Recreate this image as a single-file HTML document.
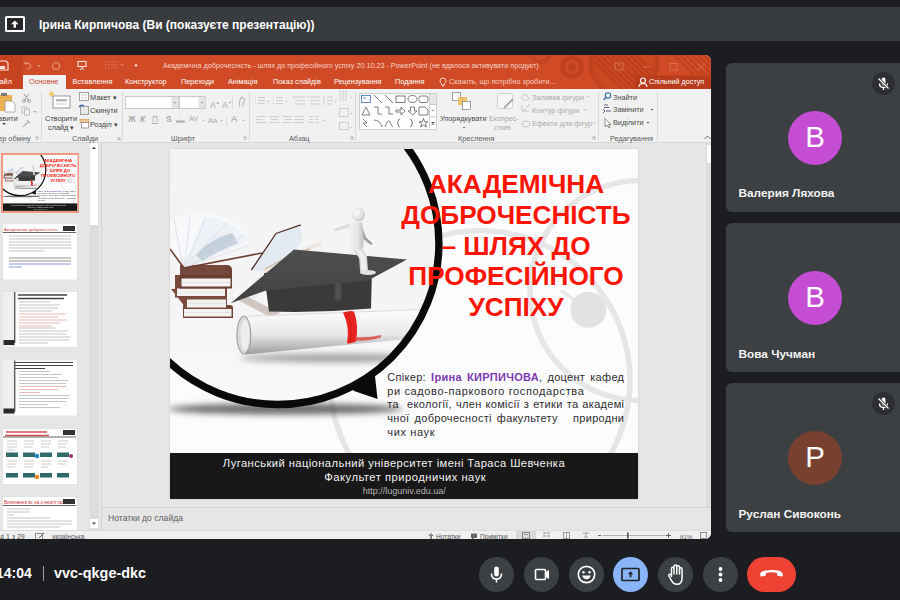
<!DOCTYPE html>
<html><head><meta charset="utf-8">
<style>
*{margin:0;padding:0;box-sizing:border-box}
html,body{width:900px;height:600px;overflow:hidden;background:#1c1d21;font-family:"Liberation Sans",sans-serif}
.a{position:absolute;white-space:nowrap}
#topbar{left:0;top:6.5px;width:900px;height:34.5px;background:#393c3f}
#ppt{left:0;top:55px;width:711px;height:484px;background:#e6e6e6;border-radius:0 6px 6px 0;overflow:hidden}
.tile{left:725.5px;width:175px;height:149.5px;background:#3c4043;border-radius:6px 0 0 6px}
.av{left:62.5px;top:48px;width:54px;height:54px;border-radius:50%;color:#fff;font-size:29.5px;text-align:center;line-height:52.6px}
.nm{left:13px;top:123.8px;color:#f4f4f4;font-size:11.8px;font-weight:bold;line-height:14px}
.mute{left:146px;top:9.5px;width:23px;height:23px;border-radius:50%;background:#2c2e31}
.tab{top:22px;color:#fff;font-size:7.3px;line-height:9px}
.rt{color:#444;font-size:7.3px;line-height:9px}
.rl{color:#5a5a5a;font-size:7.3px;line-height:9px}
.ttl{left:0;width:692px;text-align:center;color:#fa1505;font-size:26.2px;font-weight:bold;line-height:24px}
.sp{left:217.3px;width:237px;color:#2e2e2e;font-size:11px;letter-spacing:0.62px;line-height:12px}
.sp.j{text-align:justify;text-align-last:justify}
.bt{color:#f2f2f2;line-height:12px}
.st{color:#555;font-size:7px;line-height:9px}
.btn{top:556.5px;width:35px;height:35px;border-radius:50%;background:#3c4043}
.btn svg{position:absolute;left:0;top:0}
</style></head><body>
<div id="topbar" class="a">
  <div class="a" style="left:5px;top:9.8px;width:19.5px;height:15.5px;border:2px solid #fff;border-radius:1.5px;background:#24262a"></div>
  <svg class="a" style="left:9px;top:13.5px" width="12" height="9" viewBox="0 0 12 9"><path d="M5.8 0.5 L2 4.3 H4.6 V7.8 H7 V4.3 H9.6 Z" fill="#fff"/></svg>
  <div class="a" style="left:39px;top:11px;color:#fff;font-size:12px;font-weight:bold;line-height:14px">Ірина Кирпичова (Ви (показуєте презентацію))</div>
</div>

<div id="ppt" class="a">
  <!-- orange header -->
  <div class="a" style="left:0;top:0;width:711px;height:34px;background:#d04a26;overflow:hidden">
    <svg class="a" style="left:0;top:0" width="711" height="34" viewBox="0 0 711 34">
      <defs><clipPath id="oc1"><circle cx="624" cy="7.7" r="31"/></clipPath><clipPath id="oc2"><circle cx="712" cy="-6" r="40"/></clipPath></defs>
      <rect x="0" y="0" width="22.5" height="34" fill="#c7431f"/>
      <circle cx="541" cy="-2" r="9" fill="none" stroke="#c5431f" stroke-width="4"/>
      <circle cx="572" cy="12" r="9.5" fill="none" stroke="#bf411e" stroke-width="4.5"/>
      <circle cx="572" cy="12" r="4.2" fill="#bf411e"/>
      <g clip-path="url(#oc1)"><rect x="590" y="-30" width="70" height="70" fill="#cb4720"/>
        <path d="M580 -20 L640 40 M586 -20 L646 40 M592 -20 L652 40 M598 -20 L658 40 M604 -20 L664 40 M610 -20 L670 40 M616 -20 L676 40 M574 -20 L634 40 M568 -20 L628 40" stroke="#bc3f1c" stroke-width="2"/></g>
      <circle cx="624" cy="7.7" r="33" fill="none" stroke="#c1421e" stroke-width="5"/>
      <g clip-path="url(#oc2)"><path d="M660 -20 L720 40 M666 -20 L726 40 M672 -20 L732 40 M678 -20 L738 40 M684 -20 L744 40 M654 -20 L714 40" stroke="#c1411d" stroke-width="2"/></g>
      <rect x="635" y="20.5" width="76" height="13.5" fill="#b93c1c"/>
    </svg>
    <!-- quick access -->
    <svg class="a" style="left:0;top:5px" width="160" height="12" viewBox="0 0 160 12">
      <path d="M-2 1 H6 L8 3 V10 H-2 Z" fill="none" stroke="#fbe3da" stroke-width="1.2"/><rect x="0" y="6" width="5" height="3" fill="#fbe3da"/>
      <path d="M25 4 Q30 2 31 6 Q31 9 27 9 M25 4 L24 1.5 M25 4 L27.5 2" stroke="#e9987f" stroke-width="1" fill="none"/>
      <path d="M37 5 L39 7 L41 5" fill="#e9987f"/>
      <circle cx="56" cy="6" r="3.5" fill="none" stroke="#e9987f" stroke-width="1.1"/>
      <rect x="78" y="1.5" width="8" height="5" fill="none" stroke="#fbe3da" stroke-width="1.1"/><path d="M82 6.5 V10 M80 10 L82 8 L84 10" stroke="#fbe3da" stroke-width="1"/>
      <path d="M105 2 H118 M105 5 H118 M105 8 H118" stroke="#e47c5e" stroke-width="0.9" stroke-dasharray="2 1"/>
      <path d="M120 4 L122 6 L124 4" fill="#e47c5e"/>
      <circle cx="136" cy="5.5" r="1.2" fill="#fbe3da"/>
    </svg>
    <div class="a" style="left:163px;top:6px;color:#f7d3c6;font-size:7.2px;line-height:9px">Академічна доброчесність - шлях до професійного успіху 20.10.23 - PowerPoint (не вдалося активувати продукт)</div>
    <svg class="a" style="left:612px;top:7px" width="99" height="11" viewBox="0 0 99 11">
      <rect x="3" y="1" width="8" height="7" fill="none" stroke="#dd7a5c" stroke-width="0.8"/><path d="M5 3 H9" stroke="#dd7a5c" stroke-width="0.8"/>
      <path d="M31 5 H38" stroke="#dd7a5c" stroke-width="0.8"/>
      <rect x="58" y="1.5" width="7" height="6.5" fill="none" stroke="#dd7a5c" stroke-width="0.8"/>
      <path d="M86 1.5 L93 8.5 M93 1.5 L86 8.5" stroke="#dd7a5c" stroke-width="0.8"/>
    </svg>
    <!-- tabs -->
    <div class="a" style="left:23px;top:19.5px;width:42.5px;height:14.5px;background:#f1f1f1"></div>
    <div class="a tab" style="left:-6px">Файл</div>
    <div class="a tab" style="left:29px;color:#c8472a">Основне</div>
    <div class="a tab" style="left:72.6px">Вставлення</div>
    <div class="a tab" style="left:125px">Конструктор</div>
    <div class="a tab" style="left:181px">Переходи</div>
    <div class="a tab" style="left:228px">Анімація</div>
    <div class="a tab" style="left:273px">Показ слайдів</div>
    <div class="a tab" style="left:334px">Рецензування</div>
    <div class="a tab" style="left:395px">Подання</div>
    <svg class="a" style="left:439px;top:22px" width="8" height="10" viewBox="0 0 8 10"><path d="M4 1 Q7 1 7 4 Q7 5.5 5.5 6.5 V8 H2.5 V6.5 Q1 5.5 1 4 Q1 1 4 1 Z M3 9 H5" stroke="#fbe3da" stroke-width="0.9" fill="none"/></svg>
    <div class="a tab" style="left:449px;color:#f6cfc2">Скажіть, що потрібно зробити...</div>
    <svg class="a" style="left:638px;top:21.5px" width="10" height="11" viewBox="0 0 10 11"><circle cx="5" cy="3.5" r="2.5" fill="none" stroke="#fff" stroke-width="1.1"/><path d="M1 10 Q1 6.5 5 6.5 Q9 6.5 9 10" fill="none" stroke="#fff" stroke-width="1.1"/></svg>
    <div class="a tab" style="left:649px;font-size:7.2px">Спільний доступ</div>
  </div>
  <!-- ribbon -->
  <div id="ribbon" class="a" style="left:0;top:34px;width:711px;height:54px;background:#f1f1f1;border-bottom:1px solid #d6d6d6">
    <svg class="a" style="left:0;top:0" width="711" height="54" viewBox="0 0 711 54">
      <g stroke="#dadada" stroke-width="1"><path d="M41.5 3 V52 M122.5 3 V52 M249.5 3 V52 M355.5 3 V52 M598.5 3 V52 M657.5 3 V52"/></g>
      <!-- paste -->
      <rect x="-3" y="6" width="15" height="16" rx="1" fill="#e9b04d"/><rect x="1" y="4" width="6" height="3" fill="#7a7a7a"/>
      <path d="M5 12 H12 L15 15 V23 H5 Z" fill="#fff" stroke="#9a9a9a" stroke-width="0.8"/>
      <path d="M24 5 L29 12 M29 5 L24 12" stroke="#9b9b9b" stroke-width="1"/><circle cx="24" cy="12" r="1.5" fill="none" stroke="#9b9b9b" stroke-width="0.8"/><circle cx="29" cy="12" r="1.5" fill="none" stroke="#9b9b9b" stroke-width="0.8"/>
      <rect x="22" y="18" width="5" height="6" fill="none" stroke="#b4b4b4" stroke-width="0.8"/><rect x="24.5" y="20" width="5" height="6" fill="#f1f1f1" stroke="#b4b4b4" stroke-width="0.8"/><path d="M33 22 L35 24 L37 22" fill="#b4b4b4"/>
      <path d="M23 38 L29 32 M27 31 L30 34" stroke="#b4b4b4" stroke-width="1.2"/>
      <path d="M35 48 H38 V51 M35.5 50.5 L38 48" stroke="#9d9d9d" stroke-width="0.7" fill="none"/>
      <!-- new slide -->
      <rect x="53" y="7" width="17" height="12" fill="#fff" stroke="#8c8c8c" stroke-width="0.9"/><rect x="56" y="10" width="11" height="2.5" fill="#b7b7b7"/><path d="M56 15 H67" stroke="#b7b7b7" stroke-width="0.8"/>
      <path d="M51.5 2 V8 M48.5 5 H54.5 M49.5 3 L53.5 7 M53.5 3 L49.5 7" stroke="#f2c14a" stroke-width="0.9"/>
      <rect x="79.5" y="3.5" width="9" height="8" fill="#fff" stroke="#8a8a8a" stroke-width="0.8"/><path d="M81 6 H87 M81 9 H84 M85 9 H87" stroke="#b0b0b0" stroke-width="0.7"/>
      <rect x="80.5" y="17.5" width="8" height="8" fill="#e8e8e8" stroke="#8a8a8a" stroke-width="0.8"/><path d="M79 18 Q81 15 84 17" stroke="#2b6cb3" stroke-width="1.3" fill="none"/>
      <rect x="80" y="30.5" width="9" height="3" fill="#f0c89a" stroke="#d89040" stroke-width="0.6"/><rect x="81.5" y="33.5" width="7" height="5.5" fill="#fff" stroke="#8a8a8a" stroke-width="0.8"/>
      <path d="M117 49 H120 V52 M117.5 51.5 L120 49" stroke="#9d9d9d" stroke-width="0.7" fill="none"/>
      <!-- font -->
      <rect x="125.5" y="7.5" width="53" height="12" fill="#fff" stroke="#c9c9c9"/><rect x="171.5" y="8" width="7" height="11" fill="#e4e4e4"/><path d="M173.5 13 L175 14.5 L176.5 13" fill="#9a9a9a"/>
      <rect x="179.5" y="7.5" width="26" height="12" fill="#fff" stroke="#c9c9c9"/><rect x="198.5" y="8" width="7" height="11" fill="#e4e4e4"/><path d="M200.5 13 L202 14.5 L203.5 13" fill="#9a9a9a"/>
      <path d="M232.5 6 V20 M226.5 27 V37" stroke="#dcdcdc" stroke-width="1"/>
      <path d="M240 18 Q238 12 242 8 L245 11 Q242 15 243 18" stroke="#b9b9b9" stroke-width="1.1" fill="none"/>
      <path d="M202 31 L203.5 32.5 L205 31 M220 31 L221.5 32.5 L223 31 M242 31 L243.5 32.5 L245 31" fill="#b9b9b9"/>
      <path d="M243 48 H246 V51 M243.5 50.5 L246 48" stroke="#9d9d9d" stroke-width="0.7" fill="none"/>
      <!-- paragraph (disabled icons) -->
      <g stroke="#cacaca" stroke-width="0.9">
        <g transform="translate(0 3)"><path d="M255 5.5 H256 M258 5.5 H265 M255 8.5 H256 M258 8.5 H265 M255 11.5 H256 M258 11.5 H265"/>
        <path d="M273 5.5 H274 M276 5.5 H283 M273 8.5 H274 M276 8.5 H283 M273 11.5 H274 M276 11.5 H283"/>
        <path d="M292 5 H305 M295 8.5 H305 M295 12 H305 M307 5 H320 M310 8.5 H320 M310 12 H320"/>
        <path d="M324 4 V13 M327 5 H333 M327 8.5 H333 M327 12 H333"/></g>
        <path d="M340 1 V12 M343 1 V12 M346 1 V12"/>
        <path d="M256 27.5 H266 M256 30.5 H263 M256 33.5 H266 M269 27.5 H279 M270.5 30.5 H277.5 M269 33.5 H279 M282 27.5 H292 M285 30.5 H292 M282 33.5 H292 M294 27.5 H304 M294 30.5 H304 M294 33.5 H304"/>
        <path d="M309 27.5 H313 M309 30.5 H313 M309 33.5 H313 M315 27.5 H319 M315 30.5 H319 M315 33.5 H319"/>
        <rect x="339.5" y="19.5" width="9" height="8" fill="none"/>
        <rect x="339.5" y="33.5" width="9" height="7" fill="none"/>
      </g>
      <path d="M267 12 L268.5 13.5 L270 12 M285 12 L286.5 13.5 L288 12 M334 12 L335.5 13.5 L337 12 M350 8 L351.5 9.5 L353 8 M322 31 L323.5 32.5 L325 31 M350 24 L351.5 25.5 L353 24 M350 38 L351.5 39.5 L353 38" fill="#c4c4c4"/>
      <path d="M350 48 H353 V51 M350.5 50.5 L353 48" stroke="#9d9d9d" stroke-width="0.7" fill="none"/>
      <!-- shapes gallery -->
      <rect x="359.5" y="4.5" width="77" height="36" fill="#fff" stroke="#d0d0d0"/>
      <rect x="429.5" y="4.5" width="7" height="11" fill="#e6e6e6" stroke="#d0d0d0"/><rect x="429.5" y="15.5" width="7" height="12.5" fill="#fff" stroke="#d0d0d0"/><rect x="429.5" y="28" width="7" height="12.5" fill="#fff" stroke="#d0d0d0"/>
      <path d="M432 21.5 H434 M431.5 33 L433 34.5 L434.5 33 M431.5 35.5 H434.5" stroke="#777" stroke-width="0.8"/>
      <g stroke="#5d5d5d" stroke-width="0.8" fill="none">
        <rect x="361.5" y="6.5" width="9" height="7" stroke="#3d6fb0"/><path d="M363 9 H366" stroke="#3d6fb0"/>
        <path d="M374 6 L382 14 M385 6 L393 14"/><rect x="396" y="7" width="9" height="6.5"/><ellipse cx="412.5" cy="10" rx="4.5" ry="3.5"/><rect x="419" y="7" width="9" height="6.5" rx="2"/>
        <path d="M362 26 L366 18 L370 26 Z M374 18 H378 V25 H382 M385 18 H389 V25 H393 M396 21 H401 V18 L405 22 L401 26 V23 H396 Z M410.5 18 V22 H408 L412.5 26 L417 22 H414.5 V18 Z M419 18 H425 L428 21 V26 H419 Z"/>
        <path d="M363 30 L367 34 L363 34 L367 38 M374 31 Q380 31 382 38 M385 38 Q388 29 390 33 Q392 38 393 38 M400 30 Q398 30 398 33 Q398 34 397 34 Q398 34 398 35 Q398 38 400 38 M410 30 Q412 30 412 33 Q412 34 413 34 Q412 34 412 35 Q412 38 410 38"/>
        <path d="M423.5 29.5 L424.7 32.8 L428 32.8 L425.3 34.8 L426.4 38 L423.5 36 L420.6 38 L421.7 34.8 L419 32.8 L422.3 32.8 Z"/>
      </g>
      <!-- arrange -->
      <rect x="452.5" y="3.5" width="8" height="8" fill="#fff" stroke="#8a8a8a" stroke-width="0.8"/>
      <rect x="458" y="8" width="9" height="8" fill="#f0c36a"/>
      <rect x="462.5" y="12.5" width="8" height="8" fill="#fff" stroke="#8a8a8a" stroke-width="0.8"/>
      <path d="M462.5 38 L464 39.5 L465.5 38" fill="#666"/>
      <!-- quick styles -->
      <rect x="497.5" y="4.5" width="15" height="15" rx="2" fill="#f6f6f6" stroke="#d0d0d0"/><path d="M504 19 L513 10" stroke="#9d9d9d" stroke-width="1.6"/>
      <path d="M505 38 L506.5 39.5 L508 38" fill="#bbb"/>
      <g stroke="#c3c3c3" stroke-width="0.9" fill="none"><path d="M525 5 L529 9 L525 12 L521 9 Z"/><path d="M523 22 L530 15 M522 16 V22 H529"/><ellipse cx="526" cy="35" rx="4" ry="3"/></g>
      <path d="M587 7 L588.5 8.5 L590 7 M584 20 L585.5 21.5 L587 20 M593 33 L594.5 34.5 L596 33" fill="#c4c4c4"/>
      <path d="M592 48 H595 V51 M592.5 50.5 L595 48" stroke="#9d9d9d" stroke-width="0.7" fill="none"/>
      <!-- editing -->
      <circle cx="608" cy="6.5" r="2.7" fill="none" stroke="#2f6db5" stroke-width="1.1"/><path d="M606 8.5 L603.5 11" stroke="#2f6db5" stroke-width="1.3"/>
      <path d="M604 16 H608 M604 18.5 H609 M606 22 H611 M603 24 L605 22 L603 20" stroke="#3a3a6a" stroke-width="0.8" fill="none"/>
      <path d="M605 29.5 L605 38 L607 36 L609 39 L610 38.5 L608.5 35.5 L611 35.5 Z" fill="#fff" stroke="#666" stroke-width="0.7"/>
      <path d="M650.5 20 L652 21.5 L653.5 20 M646.5 33 L648 34.5 L649.5 33" fill="#555"/>
      <path d="M704.5 50 L707.5 47 L710.5 50" stroke="#555" stroke-width="0.9" fill="none"/>
    </svg>
    <div class="a rt" style="left:-13.5px;top:25px">Вставити</div>
    <div class="a" style="left:1.5px;top:34px;width:0;height:0;border-left:2px solid transparent;border-right:2px solid transparent;border-top:2px solid #555"></div>
    <div class="a rl" style="left:-16px;top:45px">Буфер обміну</div>
    <div class="a rt" style="left:45px;top:25px">Створити</div>
    <div class="a rt" style="left:48px;top:34px">слайд ▾</div>
    <div class="a rt" style="left:90px;top:4px">Макет ▾</div>
    <div class="a rt" style="left:90px;top:17px">Скинути</div>
    <div class="a rt" style="left:90px;top:31px">Розділ ▾</div>
    <div class="a rl" style="left:72px;top:45px">Слайди</div>
    <div class="a rt" style="left:210px;top:9px;color:#aaa;font-size:8.5px">A<sup style="font-size:4px">▲</sup></div>
    <div class="a rt" style="left:222px;top:9px;color:#aaa;font-size:8.5px">A<sup style="font-size:4px">▼</sup></div>
    <div class="a rt" style="left:128px;top:26px;color:#aaa;font-size:8.5px;font-weight:bold">Ж</div>
    <div class="a rt" style="left:140px;top:26px;color:#aaa;font-size:8.5px;font-style:italic;font-weight:bold">К</div>
    <div class="a rt" style="left:152px;top:26px;color:#aaa;font-size:8.5px;text-decoration:underline">П</div>
    <div class="a rt" style="left:166px;top:26px;color:#aaa;font-size:8.5px;font-weight:bold">S</div>
    <div class="a rt" style="left:176px;top:28px;color:#aaa;font-size:5.5px;text-decoration:line-through">abc</div>
    <div class="a rt" style="left:189px;top:25px;color:#aaa;font-size:7px">AV</div>
    <div class="a rt" style="left:208px;top:27px;color:#aaa;font-size:7.5px">Aa</div>
    <div class="a rt" style="left:231px;top:25px;color:#999;font-size:9.5px">A</div>
    <div class="a rl" style="left:171px;top:45px">Шрифт</div>
    <div class="a rl" style="left:289px;top:45px">Абзац</div>
    <div class="a rt" style="left:440px;top:25px;color:#4a4a4a">Упорядкувати</div>
    <div class="a rt" style="left:489px;top:25px;color:#aaa">Експрес-</div>
    <div class="a rt" style="left:494px;top:34px;color:#aaa">стилі</div>
    <div class="a rt" style="left:532px;top:3.5px;color:#aaa">Заливка фігури</div>
    <div class="a rt" style="left:532px;top:16.5px;color:#aaa">Контур фігури</div>
    <div class="a rt" style="left:532px;top:29.5px;color:#aaa">Ефекти для фігур</div>
    <div class="a rl" style="left:458px;top:45px">Креслення</div>
    <div class="a rt" style="left:613px;top:3.5px;color:#4a4a4a">Знайти</div>
    <div class="a rt" style="left:613px;top:16px;color:#4a4a4a">Замінити</div>
    <div class="a rt" style="left:613px;top:29px;color:#4a4a4a">Виділити</div>
    <div class="a rl" style="left:610px;top:45px">Редагування</div>
  </div>
  <!-- thumbnails pane -->
  <div id="thumbs" class="a" style="left:0;top:88px;width:101px;height:387px;background:#e6e6e6;overflow:hidden">
    <div class="a" style="left:0.8px;top:9.7px;width:78.5px;height:60.5px;background:#f19a80"></div>
    <div class="a" style="left:2.5px;top:12px;width:468px;height:350.5px;background:#fcfcfe;overflow:hidden;transform:scale(0.1592);transform-origin:0 0">
    <svg class="a" style="left:0;top:0" width="468" height="351" viewBox="0 0 468 351">
      <defs>
        <clipPath id="cc_t"><circle cx="107.8" cy="94.4" r="157.5"/></clipPath>
        <linearGradient id="bg1_t" x1="0" y1="0" x2="0" y2="1"><stop offset="0" stop-color="#f2f2f2"/><stop offset="0.35" stop-color="#f4f4f5"/><stop offset="0.75" stop-color="#f5f5f7"/><stop offset="1" stop-color="#fafafb"/></linearGradient>
        <linearGradient id="dip_t" x1="0" y1="0" x2="0" y2="1"><stop offset="0" stop-color="#fdfdfd"/><stop offset="0.55" stop-color="#e9e9e9"/><stop offset="1" stop-color="#9c9c9c"/></linearGradient>
        <linearGradient id="board_t" x1="0" y1="0" x2="0" y2="1"><stop offset="0" stop-color="#4e4e4e"/><stop offset="1" stop-color="#434343"/></linearGradient>
        <linearGradient id="skull_t" x1="0" y1="0" x2="1" y2="0"><stop offset="0" stop-color="#2a2a2a"/><stop offset="0.6" stop-color="#484848"/><stop offset="0.7" stop-color="#5e5e5e"/><stop offset="1" stop-color="#2c2c2c"/></linearGradient>
        <linearGradient id="pages_t" x1="0" y1="0" x2="1" y2="1"><stop offset="0" stop-color="#f3f5f8"/><stop offset="1" stop-color="#c9d5e0"/></linearGradient>
        <linearGradient id="fig_t" x1="0" y1="0" x2="1" y2="0"><stop offset="0" stop-color="#f4f4f4"/><stop offset="0.6" stop-color="#e6e6e6"/><stop offset="1" stop-color="#bdbdbd"/></linearGradient><radialGradient id="head_t" cx="0.35" cy="0.35" r="0.75"><stop offset="0" stop-color="#fafafa"/><stop offset="0.7" stop-color="#dedede"/><stop offset="1" stop-color="#b8b8b8"/></radialGradient>
        <filter id="bl_t" x="-50%" y="-300%" width="200%" height="700%"><feGaussianBlur stdDeviation="3"/></filter>
        <filter id="bl2_t"><feGaussianBlur stdDeviation="1.2"/></filter>
      </defs>
      <!-- decorative rings -->
      <g fill="none" stroke="#e6e6e9" stroke-width="5.5">
        <circle cx="310" cy="231.5" r="150"/>
        <circle cx="470" cy="141.5" r="110"/>
        <path d="M391 141.5 L418.3 160.8" stroke-width="3"/>
      </g>
      <circle cx="418.3" cy="160.8" r="18" fill="#e2e2e5"/>
      <ellipse cx="115" cy="260" rx="118" ry="5.5" fill="#3a3a3a" opacity="0.75" filter="url(#bl_t)"/>
      <!-- image inside circle -->
      <g clip-path="url(#cc_t)">
        <rect x="-60" y="-60" width="340" height="320" fill="url(#bg1_t)"/>
        
        <ellipse cx="165" cy="209" rx="95" ry="4" fill="#555" opacity="0.55" filter="url(#bl_t)"/>
        <!-- book stack -->
        <g>
          <path d="M13 156 H60 Q63 156 63 159 V169 H13 Z" fill="#744537"/>
          <rect x="14" y="160" width="47.5" height="7.5" fill="#f4f4f4"/>
          <path d="M14 163.5 H61" stroke="#d8d8d8" stroke-width="0.6"/>
          <path d="M1 140 L52 138 L57 143 V159 H16 Z" fill="#7e4c3c"/>
          <rect x="17" y="150.5" width="39" height="8" fill="#f2f2f2"/>
          <path d="M17 154.5 H56" stroke="#d8d8d8" stroke-width="0.6"/>
          <path d="M5 126 H54 Q57 126 57 129 V148.5 H5 Z" fill="#7a4a3b"/>
          <rect x="7" y="139.5" width="48" height="7.5" fill="#f3f3f3"/>
          <path d="M7 143 H55" stroke="#d8d8d8" stroke-width="0.6"/>
          <path d="M10 116 H58 Q62 117 62 121 V139.5 H10 Z" fill="#6a4033"/>
          <path d="M10 116 H58 L60 126 H10 Z" fill="#74483a"/>
          <rect x="11.5" y="129.5" width="49" height="8" fill="#f5f5f5"/>
          <path d="M11.5 133.5 H60.5" stroke="#d8d8d8" stroke-width="0.6"/>
        </g>
        <!-- open book on top -->
        <path d="M14 118.5 L0 96 L0 70 Q30 62 46 66 Q66 72 72 80 Q78 88 79 92 Q60 104 40 112 Z" fill="#f6f8fa"/>
        <path d="M14 118.5 Q24 90 34 68 Q56 70 70 82 L78 92 Q50 106 14 118.5 Z" fill="#eef2f6"/>
        <path d="M26 106 Q40 90 62 84 L68 94 Q48 102 32 112 Z" fill="#a3b4c6" opacity="0.55"/>
        <path d="M14 118.5 Q8 96 4 70 M14 118.5 Q18 92 20 66 M14 118.5 Q28 90 36 68 M14 118.5 Q40 90 58 74 M14 118.5 Q50 100 74 86 M14 118.5 Q46 108 80 96" stroke="#d3d9e0" stroke-width="0.7" fill="none"/>
        <path d="M0 100 L14 119 L92 104" stroke="#6e4033" stroke-width="1.6" fill="none"/>
        <!-- second book -->
        <path d="M81.3 121.2 L106 84.5 L130.7 75.8 L132 92 L104 124 Z" fill="#e3eaf1"/>
        <path d="M92 122 Q118 104 152 92 L150 96 Q120 110 100 126 Z" fill="#ece6dc"/>
        <path d="M95 120 Q120 106 140 100" stroke="#b89a80" stroke-width="0.8" fill="none"/>
        <path d="M81.3 121.2 L106 84.5 L130.7 75.8" stroke="#4e2e26" stroke-width="1.3" fill="none" stroke-linejoin="round"/>
        <path d="M76 148 L88 128 L96 130 L86 150 Z" fill="#e8eef3"/>
        <path d="M66 150 L100 168 L110 164 L74 146 Z" fill="#b9a59c" opacity="0.6"/>
        <!-- cap skull -->
        <path d="M94 124 L202 120 L201 159.5 Q150 164 99 162.5 Z" fill="#3a3a3a"/>
        <rect x="165" y="122" width="6" height="30" rx="3" fill="#5c5c5c" opacity="0.7" filter="url(#bl2_t)"/>
        <!-- board -->
        <path d="M60.7 154.2 L124 100.5 L237 110.5 L198 131.5 L96 141.5 Z" fill="url(#board_t)"/>
        <!-- figure -->
        <g stroke-linecap="round" stroke-linejoin="round" fill="none">
          <path d="M191 78.5 L195 89.5 L201 94.5" stroke="#9a9a9a" stroke-width="2.6"/>
          <path d="M181 76 L166 80.5" stroke="#dcdcdc" stroke-width="3"/>
          <path d="M186 98 L193 108 L194 121" stroke="#d6d6d6" stroke-width="8"/>
          <path d="M186 98 L193 108 L194 121" stroke="#ededed" stroke-width="5"/>
        </g>
        <ellipse cx="198" cy="123.5" rx="8" ry="2.6" fill="#e2e2e2"/>
        <path d="M180 74.5 Q186 72 192 73.5 Q195 86 193 99.5 Q186 102 180 100.5 Q177 87 180 74.5 Z" fill="url(#fig_t)"/>
        <circle cx="188.3" cy="65.5" r="6.7" fill="url(#head_t)"/>
        <!-- diploma -->
        <path d="M73 167.5 L252 160.5 L252 188.5 L75 205.5 Z" fill="url(#dip_t)"/>
        <path d="M73 167.5 L252 160.5" stroke="#d5d5d5" stroke-width="0.8"/>
        <ellipse cx="73.8" cy="186" rx="7" ry="19" fill="#d9d9d9" stroke="#9a9a9a" stroke-width="1"/>
        <ellipse cx="75" cy="186" rx="4.5" ry="15.5" fill="#ededed"/>
        <path d="M173 163.5 Q180 161 184 162.5 Q189 176 186 192.5 Q181 195 177 194.5 Q180 178 173 163.5 Z" fill="#e8231f"/><path d="M178 164 Q183 177 180 193" stroke="#b81a16" stroke-width="1" fill="none" opacity="0.6"/>
        <path d="M185 188 Q198 189 211 186 L211 188.5 Q196 192.5 185 191.5 Z" fill="#d83a34" opacity="0.75"/>
      </g>
      <!-- black ring -->
      <circle cx="107.8" cy="94.4" r="161.1" fill="none" stroke="#0a0a0a" stroke-width="7.4"/>
      <path d="M201.6 225.1 L181.6 237.9 L184 242 L207.5 250 L205 227 Z" fill="#0a0a0a"/>
      <!-- bottom band -->
      <rect x="0" y="304" width="468" height="47" fill="#181818"/>
    </svg>
    <div class="a ttl" style="top:23px">АКАДЕМІЧНА</div>
    <div class="a ttl" style="top:54.3px">ДОБРОЧЕСНІСТЬ</div>
    <div class="a ttl" style="top:85.6px">– ШЛЯХ ДО</div>
    <div class="a ttl" style="top:115.4px">ПРОФЕСІЙНОГО</div>
    <div class="a ttl" style="top:146.3px">УСПІХУ</div>
    <div class="a sp j" style="top:222px;letter-spacing:0.3px">Спікер: <b style="color:#7c3aae">Ірина КИРПИЧОВА</b>, доцент кафед</div>
    <div class="a sp" style="top:236px">ри садово-паркового господарства</div>
    <div class="a sp j" style="top:249.8px;letter-spacing:0.3px">та&nbsp; екології, член комісії з етики та академі</div>
    <div class="a sp j" style="top:263.5px;letter-spacing:0.3px">чної доброчесності факультету &nbsp; природни</div>
    <div class="a sp" style="top:277.5px">чих наук</div>
    <div class="a bt" style="left:52.8px;top:308.1px;font-size:11.2px;letter-spacing:0.42px">Луганський національний університет імені Тараса Шевченка</div>
    <div class="a bt" style="left:154.3px;top:322.3px;font-size:11.2px;letter-spacing:0.5px">Факультет природничих наук</div>
    <div class="a bt" style="left:192.8px;top:336.2px;font-size:9px;color:#b4b4b4">http://luguniv.edu.ua/</div>
  </div>
    <svg class="a" style="left:0;top:0" width="101" height="387" viewBox="0 0 101 387">
      <g fill="#fff" stroke="#d8d8d8" stroke-width="0.6">
        <rect x="2.3" y="80.8" width="75" height="56.2"/>
        <rect x="2.3" y="148.5" width="75" height="56"/>
        <rect x="2.3" y="217" width="75" height="56"/>
        <rect x="2.3" y="285.5" width="75" height="56"/>
        <rect x="2.3" y="353.5" width="75" height="56"/>
      </g>
      <!-- thumb2 -->
      <text x="4" y="87.5" font-family="Liberation Sans" font-size="4.4" fill="#d23a3a">Академічна доброчесність</text>
      <rect x="63" y="83" width="12" height="5" fill="#333"/>
      <path d="M3 89.5 H76" stroke="#555" stroke-width="0.9"/>
      <g stroke="#a8a8a8" stroke-width="0.7"><path d="M9 93 H71 M9 96 H71 M9 99 H71 M9 102 H71 M9 105 H71 M9 108 H44"/><path d="M9 115 H71 M9 118 H71" stroke="#666"/><path d="M9 121 H71 M9 124 H22" stroke="#5a6fd0"/></g>
      <!-- thumb3 & 4 -->
      <g id="t3">
        <rect x="2.6" y="148.8" width="12" height="55.5" fill="#ececec"/>
        <path d="M5 149 V204 M8 149 V204 M11 149 V204" stroke="#f7f7f7" stroke-width="1"/>
        <path d="M14.8 149 V200" stroke="#222" stroke-width="1"/>
        <path d="M18 152 H67 M18 155.5 H64" stroke="#444" stroke-width="1.6"/>
        <g stroke="#acacac" stroke-width="0.7"><path d="M19 159 H50 M19 162 H60 M19 165 H58 M19 168 H52 M19 185 H55 M19 188 H68 M19 191 H66 M19 194 H70 M19 197 H69 M19 200 H48"/></g>
        <g stroke="#e39a9a" stroke-width="0.7"><path d="M19 171 H66 M19 174 H58 M19 177 H67 M19 180 H60 M19 183 H52"/></g>
        <rect x="3.5" y="197" width="11" height="5" fill="#2a2a2a"/>
      </g>
      <g transform="translate(0 68.5)">
        <rect x="2.6" y="148.8" width="12" height="55.5" fill="#ececec"/>
        <path d="M5 149 V204 M8 149 V204 M11 149 V204" stroke="#f7f7f7" stroke-width="1"/>
        <path d="M14.8 149 V200" stroke="#222" stroke-width="1"/>
        <path d="M15 151 H73 M15 154 H73 M15 157 H45" stroke="#444" stroke-width="1.2"/>
        <g stroke="#acacac" stroke-width="0.7"><path d="M19 160 H50 M19 163 H62 M19 166 H58 M19 169 H68 M19 172 H66 M19 184 H70 M19 187 H69 M19 190 H66 M19 193 H48 M19 196 H60"/></g>
        <g stroke="#e39a9a" stroke-width="0.7"><path d="M19 175 H66 M19 178 H58 M19 181 H40"/></g>
        <rect x="3.5" y="197" width="11" height="5" fill="#2a2a2a"/>
      </g>
      <!-- thumb5 -->
      <path d="M6 289 H47 M5 292.5 H49" stroke="#d85050" stroke-width="1.4"/>
      <rect x="63" y="287" width="12" height="5" fill="#333"/>
      <path d="M3 294 H76" stroke="#555" stroke-width="0.9"/>
      <g fill="#2f6b6b">
        <rect x="6" y="309.5" width="12" height="4.5"/><rect x="23" y="309.5" width="12" height="4.5"/><rect x="40" y="309.5" width="12" height="4.5"/><rect x="57" y="309.5" width="12" height="4.5"/>
        <rect x="6" y="330" width="12" height="4.5"/><rect x="23" y="330" width="12" height="4.5"/><rect x="40" y="330" width="12" height="4.5"/><rect x="57" y="330" width="12" height="4.5"/>
      </g>
      <g stroke="#b4b4b4" stroke-width="0.7"><path d="M7 298 H17 M7 301 H17 M7 304 H17 M7 307 H15 M24 298 H34 M24 301 H34 M24 304 H32 M41 298 H51 M41 301 H51 M41 304 H49 M58 298 H68 M58 301 H67 M58 304 H66 M7 318 H17 M7 321 H17 M7 324 H15 M24 318 H34 M24 321 H34 M24 324 H33 M41 318 H51 M41 321 H51 M41 324 H48 M58 318 H68 M58 321 H66"/></g>
      <circle cx="37" cy="313" r="2.2" fill="#1e88d0"/><circle cx="37" cy="334" r="2.3" fill="#f08a24"/><circle cx="71" cy="313" r="2" fill="#a0306a"/>
      <!-- thumb6 -->
      <text x="4" y="360.5" font-family="Liberation Sans" font-size="4.6" fill="#d23a3a">Виконання вс на о ннатігтас</text>
      <rect x="63" y="356" width="12" height="5" fill="#333"/>
      <path d="M3 362.5 H76" stroke="#555" stroke-width="0.9"/>
      <g stroke="#acacac" stroke-width="0.7"><path d="M7 366 H30 M7 369 H30 M7 372 H14 M7 375 H50 M7 378 H72 M7 381 H72 M7 384 H60"/></g>
      <!-- scrollbar -->
      <rect x="89.5" y="0" width="9" height="387" fill="#dcdcdc"/>
      <rect x="90" y="0" width="8" height="9" fill="#fff"/>
      <path d="M92 6 L94 3.8 L96 6 Z" fill="#444"/>
      <rect x="90" y="9" width="8" height="73" fill="#fff"/>
      <rect x="90" y="376" width="8" height="9" fill="#fff"/>
      <path d="M92 379.5 L94 381.7 L96 379.5 Z" fill="#444"/>
    </svg>
  </div>
  <div class="a" style="left:101px;top:88px;width:1px;height:387px;background:#d2d2d2"></div>
  <!-- slide -->
  <div id="slide" class="a" style="left:170px;top:93.5px;width:468px;height:350.5px;background:#fcfcfe;overflow:hidden;box-shadow:0 0 2px rgba(0,0,0,0.15)">
    <svg class="a" style="left:0;top:0" width="468" height="351" viewBox="0 0 468 351">
      <defs>
        <clipPath id="cc"><circle cx="107.8" cy="94.4" r="157.5"/></clipPath>
        <linearGradient id="bg1" x1="0" y1="0" x2="0" y2="1"><stop offset="0" stop-color="#f2f2f2"/><stop offset="0.35" stop-color="#f4f4f5"/><stop offset="0.75" stop-color="#f5f5f7"/><stop offset="1" stop-color="#fafafb"/></linearGradient>
        <linearGradient id="dip" x1="0" y1="0" x2="0" y2="1"><stop offset="0" stop-color="#fdfdfd"/><stop offset="0.55" stop-color="#e9e9e9"/><stop offset="1" stop-color="#9c9c9c"/></linearGradient>
        <linearGradient id="board" x1="0" y1="0" x2="0" y2="1"><stop offset="0" stop-color="#4e4e4e"/><stop offset="1" stop-color="#434343"/></linearGradient>
        <linearGradient id="skull" x1="0" y1="0" x2="1" y2="0"><stop offset="0" stop-color="#2a2a2a"/><stop offset="0.6" stop-color="#484848"/><stop offset="0.7" stop-color="#5e5e5e"/><stop offset="1" stop-color="#2c2c2c"/></linearGradient>
        <linearGradient id="pages" x1="0" y1="0" x2="1" y2="1"><stop offset="0" stop-color="#f3f5f8"/><stop offset="1" stop-color="#c9d5e0"/></linearGradient>
        <linearGradient id="fig" x1="0" y1="0" x2="1" y2="0"><stop offset="0" stop-color="#f4f4f4"/><stop offset="0.6" stop-color="#e6e6e6"/><stop offset="1" stop-color="#bdbdbd"/></linearGradient><radialGradient id="head" cx="0.35" cy="0.35" r="0.75"><stop offset="0" stop-color="#fafafa"/><stop offset="0.7" stop-color="#dedede"/><stop offset="1" stop-color="#b8b8b8"/></radialGradient>
        <filter id="bl" x="-50%" y="-300%" width="200%" height="700%"><feGaussianBlur stdDeviation="3"/></filter>
        <filter id="bl2"><feGaussianBlur stdDeviation="1.2"/></filter>
      </defs>
      <!-- decorative rings -->
      <g fill="none" stroke="#e6e6e9" stroke-width="5.5">
        <circle cx="310" cy="231.5" r="150"/>
        <circle cx="470" cy="141.5" r="110"/>
        <path d="M391 141.5 L418.3 160.8" stroke-width="3"/>
      </g>
      <circle cx="418.3" cy="160.8" r="18" fill="#e2e2e5"/>
      <ellipse cx="115" cy="260" rx="118" ry="5.5" fill="#3a3a3a" opacity="0.75" filter="url(#bl)"/>
      <!-- image inside circle -->
      <g clip-path="url(#cc)">
        <rect x="-60" y="-60" width="340" height="320" fill="url(#bg1)"/>
        
        <ellipse cx="165" cy="209" rx="95" ry="4" fill="#555" opacity="0.55" filter="url(#bl)"/>
        <!-- book stack -->
        <g>
          <path d="M13 156 H60 Q63 156 63 159 V169 H13 Z" fill="#744537"/>
          <rect x="14" y="160" width="47.5" height="7.5" fill="#f4f4f4"/>
          <path d="M14 163.5 H61" stroke="#d8d8d8" stroke-width="0.6"/>
          <path d="M1 140 L52 138 L57 143 V159 H16 Z" fill="#7e4c3c"/>
          <rect x="17" y="150.5" width="39" height="8" fill="#f2f2f2"/>
          <path d="M17 154.5 H56" stroke="#d8d8d8" stroke-width="0.6"/>
          <path d="M5 126 H54 Q57 126 57 129 V148.5 H5 Z" fill="#7a4a3b"/>
          <rect x="7" y="139.5" width="48" height="7.5" fill="#f3f3f3"/>
          <path d="M7 143 H55" stroke="#d8d8d8" stroke-width="0.6"/>
          <path d="M10 116 H58 Q62 117 62 121 V139.5 H10 Z" fill="#6a4033"/>
          <path d="M10 116 H58 L60 126 H10 Z" fill="#74483a"/>
          <rect x="11.5" y="129.5" width="49" height="8" fill="#f5f5f5"/>
          <path d="M11.5 133.5 H60.5" stroke="#d8d8d8" stroke-width="0.6"/>
        </g>
        <!-- open book on top -->
        <path d="M14 118.5 L0 96 L0 70 Q30 62 46 66 Q66 72 72 80 Q78 88 79 92 Q60 104 40 112 Z" fill="#f6f8fa"/>
        <path d="M14 118.5 Q24 90 34 68 Q56 70 70 82 L78 92 Q50 106 14 118.5 Z" fill="#eef2f6"/>
        <path d="M26 106 Q40 90 62 84 L68 94 Q48 102 32 112 Z" fill="#a3b4c6" opacity="0.55"/>
        <path d="M14 118.5 Q8 96 4 70 M14 118.5 Q18 92 20 66 M14 118.5 Q28 90 36 68 M14 118.5 Q40 90 58 74 M14 118.5 Q50 100 74 86 M14 118.5 Q46 108 80 96" stroke="#d3d9e0" stroke-width="0.7" fill="none"/>
        <path d="M0 100 L14 119 L92 104" stroke="#6e4033" stroke-width="1.6" fill="none"/>
        <!-- second book -->
        <path d="M81.3 121.2 L106 84.5 L130.7 75.8 L132 92 L104 124 Z" fill="#e3eaf1"/>
        <path d="M92 122 Q118 104 152 92 L150 96 Q120 110 100 126 Z" fill="#ece6dc"/>
        <path d="M95 120 Q120 106 140 100" stroke="#b89a80" stroke-width="0.8" fill="none"/>
        <path d="M81.3 121.2 L106 84.5 L130.7 75.8" stroke="#4e2e26" stroke-width="1.3" fill="none" stroke-linejoin="round"/>
        <path d="M76 148 L88 128 L96 130 L86 150 Z" fill="#e8eef3"/>
        <path d="M66 150 L100 168 L110 164 L74 146 Z" fill="#b9a59c" opacity="0.6"/>
        <!-- cap skull -->
        <path d="M94 124 L202 120 L201 159.5 Q150 164 99 162.5 Z" fill="#3a3a3a"/>
        <rect x="165" y="122" width="6" height="30" rx="3" fill="#5c5c5c" opacity="0.7" filter="url(#bl2)"/>
        <!-- board -->
        <path d="M60.7 154.2 L124 100.5 L237 110.5 L198 131.5 L96 141.5 Z" fill="url(#board)"/>
        <!-- figure -->
        <g stroke-linecap="round" stroke-linejoin="round" fill="none">
          <path d="M191 78.5 L195 89.5 L201 94.5" stroke="#9a9a9a" stroke-width="2.6"/>
          <path d="M181 76 L166 80.5" stroke="#dcdcdc" stroke-width="3"/>
          <path d="M186 98 L193 108 L194 121" stroke="#d6d6d6" stroke-width="8"/>
          <path d="M186 98 L193 108 L194 121" stroke="#ededed" stroke-width="5"/>
        </g>
        <ellipse cx="198" cy="123.5" rx="8" ry="2.6" fill="#e2e2e2"/>
        <path d="M180 74.5 Q186 72 192 73.5 Q195 86 193 99.5 Q186 102 180 100.5 Q177 87 180 74.5 Z" fill="url(#fig)"/>
        <circle cx="188.3" cy="65.5" r="6.7" fill="url(#head)"/>
        <!-- diploma -->
        <path d="M73 167.5 L252 160.5 L252 188.5 L75 205.5 Z" fill="url(#dip)"/>
        <path d="M73 167.5 L252 160.5" stroke="#d5d5d5" stroke-width="0.8"/>
        <ellipse cx="73.8" cy="186" rx="7" ry="19" fill="#d9d9d9" stroke="#9a9a9a" stroke-width="1"/>
        <ellipse cx="75" cy="186" rx="4.5" ry="15.5" fill="#ededed"/>
        <path d="M173 163.5 Q180 161 184 162.5 Q189 176 186 192.5 Q181 195 177 194.5 Q180 178 173 163.5 Z" fill="#e8231f"/><path d="M178 164 Q183 177 180 193" stroke="#b81a16" stroke-width="1" fill="none" opacity="0.6"/>
        <path d="M185 188 Q198 189 211 186 L211 188.5 Q196 192.5 185 191.5 Z" fill="#d83a34" opacity="0.75"/>
      </g>
      <!-- black ring -->
      <circle cx="107.8" cy="94.4" r="161.1" fill="none" stroke="#0a0a0a" stroke-width="7.4"/>
      <path d="M201.6 225.1 L181.6 237.9 L184 242 L207.5 250 L205 227 Z" fill="#0a0a0a"/>
      <!-- bottom band -->
      <rect x="0" y="304" width="468" height="47" fill="#181818"/>
    </svg>
    <div class="a ttl" style="top:23px">АКАДЕМІЧНА</div>
    <div class="a ttl" style="top:54.3px">ДОБРОЧЕСНІСТЬ</div>
    <div class="a ttl" style="top:85.6px">– ШЛЯХ ДО</div>
    <div class="a ttl" style="top:115.4px">ПРОФЕСІЙНОГО</div>
    <div class="a ttl" style="top:146.3px">УСПІХУ</div>
    <div class="a sp j" style="top:222px;letter-spacing:0.3px">Спікер: <b style="color:#7c3aae">Ірина КИРПИЧОВА</b>, доцент кафед</div>
    <div class="a sp" style="top:236px">ри садово-паркового господарства</div>
    <div class="a sp j" style="top:249.8px;letter-spacing:0.3px">та&nbsp; екології, член комісії з етики та академі</div>
    <div class="a sp j" style="top:263.5px;letter-spacing:0.3px">чної доброчесності факультету &nbsp; природни</div>
    <div class="a sp" style="top:277.5px">чих наук</div>
    <div class="a bt" style="left:52.8px;top:308.1px;font-size:11.2px;letter-spacing:0.42px">Луганський національний університет імені Тараса Шевченка</div>
    <div class="a bt" style="left:154.3px;top:322.3px;font-size:11.2px;letter-spacing:0.5px">Факультет природничих наук</div>
    <div class="a bt" style="left:192.8px;top:336.2px;font-size:9px;color:#b4b4b4">http://luguniv.edu.ua/</div>
  </div>
  <div class="a" style="left:706px;top:88px;width:5px;height:364px;background:#dedede"></div>
  <div class="a" style="left:707px;top:90px;width:4px;height:18px;background:#fff"></div>
  <!-- notes -->
  <div class="a" style="left:102px;top:451.5px;width:609px;height:1px;background:#d4d4d4"></div>
  <div class="a" style="left:108px;top:457.5px;color:#5e5e5e;font-size:8.6px;line-height:11px">Нотатки до слайда</div>
  <!-- status -->
  <div id="status" class="a" style="left:0;top:474.5px;width:711px;height:10px;background:#f0f0f0;border-top:1px solid #dcdcdc">
    <div class="a st" style="left:-17px;top:1.5px">Слайд 1 з 29</div>
    <svg class="a" style="left:34px;top:1px" width="12" height="9" viewBox="0 0 12 9"><rect x="1.5" y="1.5" width="7" height="7" fill="none" stroke="#777" stroke-width="0.8"/><path d="M5 6 L10 1" stroke="#555" stroke-width="1"/></svg>
    <div class="a st" style="left:52px;top:1.5px;font-size:6.6px">українська</div>
    <svg class="a" style="left:426px;top:1px" width="10" height="9" viewBox="0 0 10 9"><path d="M5 1 L2 4 H4 V8 H6 V4 H8 Z" fill="#888"/></svg>
    <div class="a st" style="left:436px;top:1.5px;font-size:6.6px">Нотатки</div>
    <svg class="a" style="left:470px;top:1px" width="8" height="9" viewBox="0 0 8 9"><path d="M1 1.5 H7 V6 H4 L2 8 V6 H1 Z" fill="#666"/></svg>
    <div class="a st" style="left:480px;top:1.5px;font-size:6.6px">Примітки</div>
    <div class="a" style="left:516px;top:0;width:20px;height:9px;background:#d9d9d9"></div>
    <svg class="a" style="left:516px;top:0" width="195" height="9" viewBox="0 0 195 9">
      <rect x="6.5" y="1.5" width="7" height="6" fill="none" stroke="#777" stroke-width="0.8"/><path d="M8 3.5 H12" stroke="#777" stroke-width="0.7"/>
      <path d="M27 2 H30 M31 2 H34 M27 5 H30 M31 5 H34" stroke="#888" stroke-width="1.1"/>
      <rect x="47.5" y="1.5" width="6" height="6" fill="none" stroke="#888" stroke-width="0.8"/><path d="M50.5 1.5 V7.5" stroke="#888" stroke-width="0.7"/>
      <path d="M67 2 H73 M70 2 V6 M68 7 L70 5.5 L72 7" stroke="#888" stroke-width="0.8" fill="none"/>
      <path d="M82 4.5 H85" stroke="#555" stroke-width="0.9"/>
      <path d="M86 4.5 H153" stroke="#9a9a9a" stroke-width="0.7"/>
      <rect x="111" y="1.5" width="1.6" height="6" fill="#555"/>
      <path d="M150 4.5 H155 M152.5 2 V7" stroke="#555" stroke-width="0.9"/>
      <text x="164" y="7.5" font-family="Liberation Sans" font-size="6.2" fill="#666">81%</text>
      <rect x="184.5" y="1.5" width="6" height="6" fill="none" stroke="#777" stroke-width="0.8"/>
    </svg>
  </div>
</div>

<div class="tile a" style="top:62.5px">
  <div class="mute a"><svg width="23" height="23" viewBox="0 0 23 23"><rect x="9.5" y="5.5" width="4" height="8" rx="2" fill="#fff"/><path d="M7.5 11.5 Q7.5 15.5 11.5 15.5 Q15.5 15.5 15.5 11.5" stroke="#fff" stroke-width="1.3" fill="none"/><path d="M11.5 15.5 V18" stroke="#fff" stroke-width="1.3"/><path d="M6.5 6.5 L16.5 16.5" stroke="#2c2e31" stroke-width="2.6"/><path d="M6.5 6.5 L16.5 16.5" stroke="#fff" stroke-width="1.3"/></svg></div>
  <div class="av a" style="background:#c54dd3">В</div>
  <div class="nm a">Валерия Ляхова</div>
</div>
<div class="tile a" style="top:222.75px">
  <div class="av a" style="background:#c54dd3">В</div>
  <div class="nm a">Вова Чучман</div>
</div>
<div class="tile a" style="top:382.75px">
  <div class="mute a"><svg width="23" height="23" viewBox="0 0 23 23"><rect x="9.5" y="5.5" width="4" height="8" rx="2" fill="#fff"/><path d="M7.5 11.5 Q7.5 15.5 11.5 15.5 Q15.5 15.5 15.5 11.5" stroke="#fff" stroke-width="1.3" fill="none"/><path d="M11.5 15.5 V18" stroke="#fff" stroke-width="1.3"/><path d="M6.5 6.5 L16.5 16.5" stroke="#2c2e31" stroke-width="2.6"/><path d="M6.5 6.5 L16.5 16.5" stroke="#fff" stroke-width="1.3"/></svg></div>
  <div class="av a" style="background:#78412f">Р</div>
  <div class="nm a">Руслан Сивоконь</div>
</div>

<div class="a" style="left:-4px;top:565px;color:#fff;font-size:14px;font-weight:bold;line-height:16px">14:04</div>
<div class="a" style="left:43px;top:566px;width:1px;height:15px;background:#9aa0a6"></div>
<div class="a" style="left:54px;top:565px;color:#fff;font-size:14.4px;font-weight:bold;line-height:16px">vvc-qkge-dkc</div>

<div class="btn a" style="left:478.5px"><svg width="35" height="35" viewBox="0 0 35 35"><rect x="15.2" y="9.5" width="4.6" height="10" rx="2.3" fill="#fff"/><path d="M12.5 16.5 Q12.5 22 17.5 22 Q22.5 22 22.5 16.5" stroke="#fff" stroke-width="1.6" fill="none"/><path d="M17.5 22 V25.5" stroke="#fff" stroke-width="1.6"/></svg></div>
<div class="btn a" style="left:523.5px"><svg width="35" height="35" viewBox="0 0 35 35"><rect x="11.5" y="12.5" width="10" height="10" rx="1" stroke="#fff" stroke-width="1.6" fill="none"/><path d="M21.5 16 L24.5 13.5 V21.5 L21.5 19 Z" fill="#fff" stroke="#fff" stroke-width="1"/></svg></div>
<div class="btn a" style="left:568.5px"><svg width="35" height="35" viewBox="0 0 35 35"><circle cx="17.5" cy="17.5" r="8.2" stroke="#fff" stroke-width="1.7" fill="none"/><circle cx="14.5" cy="15.3" r="1.2" fill="#fff"/><circle cx="20.5" cy="15.3" r="1.2" fill="#fff"/><path d="M13.3 18.6 H21.7 Q21 22.3 17.5 22.3 Q14 22.3 13.3 18.6 Z" fill="#fff"/></svg></div>
<div class="btn a" style="left:612.5px;background:#8ab4f8"><svg width="35" height="35" viewBox="0 0 35 35"><rect x="9" y="11.5" width="17" height="12" rx="1" stroke="#202124" stroke-width="1.7" fill="none"/><path d="M17.5 14.3 L14.8 17.2 H16.6 V20.3 H18.4 V17.2 H20.2 Z" fill="#202124"/></svg></div>
<div class="btn a" style="left:657.5px"><svg width="35" height="35" viewBox="0 0 35 35"><g transform="translate(17.5 17.5) scale(1.15) translate(-16.5 -17.5)"><path d="M13 19 V12.5 Q13 11.2 14.1 11.2 Q15.2 11.2 15.2 12.5 V17 V10.5 Q15.2 9.2 16.4 9.2 Q17.6 9.2 17.6 10.5 V17 V11 Q17.6 9.8 18.8 9.8 Q20 9.8 20 11 V17 V12.8 Q20 11.6 21.1 11.6 Q22.2 11.6 22.2 12.8 V20.5 Q22.2 26 17.6 26 Q14.8 26 13.3 23.3 L10.8 18.8 Q10.3 17.8 11.2 17.4 Q12.1 17 12.7 17.9 Z" fill="#3c4043" stroke="#fff" stroke-width="1.3" stroke-linejoin="round"/></g></svg></div>
<div class="btn a" style="left:702.5px"><svg width="35" height="35" viewBox="0 0 35 35"><circle cx="17.5" cy="12" r="1.9" fill="#fff"/><circle cx="17.5" cy="17.5" r="1.9" fill="#fff"/><circle cx="17.5" cy="23" r="1.9" fill="#fff"/></svg></div>
<div class="btn a" style="left:747px;width:48.5px;border-radius:17.5px;background:#ee4334"><svg width="49" height="35" viewBox="0 0 49 35"><path d="M13.2 17.3 Q13.2 12.9 24.5 12.9 Q35.8 12.9 35.8 17.3 L35.8 18.6 Q35.8 19.6 34.8 19.5 L30.9 18.8 Q30 18.6 30 17.7 V15.9 Q24.5 14.6 19 15.9 V17.7 Q19 18.6 18.1 18.8 L14.2 19.5 Q13.2 19.6 13.2 18.6 Z" fill="#fff"/></svg></div>
</body></html>
